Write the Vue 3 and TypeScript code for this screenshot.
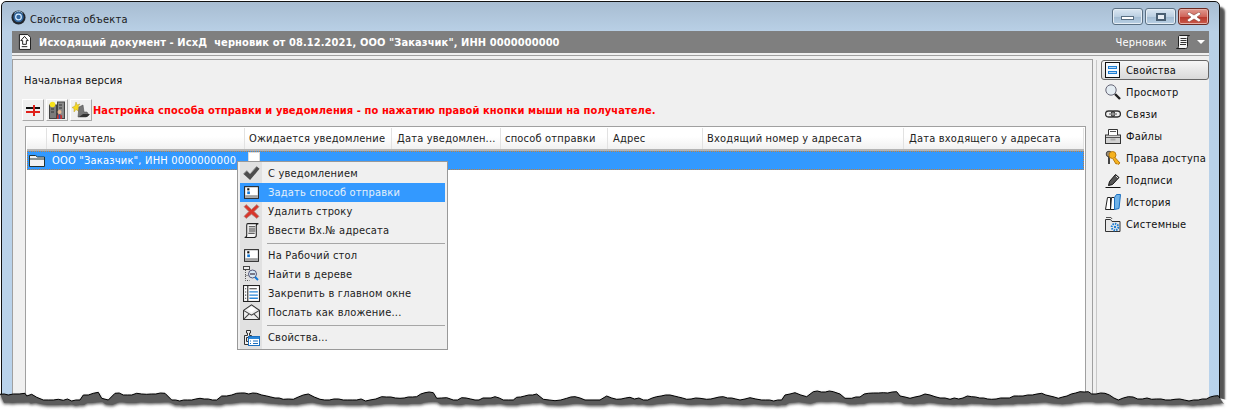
<script setup lang="ts">
const columns = ['', 'Получатель', 'Ожидается уведомление', 'Дата уведомлен...', 'способ отправки', 'Адрес', 'Входящий номер у адресата', 'Дата входящего у адресата']

const tabs = [
  { id: 'form', label: 'Свойства', active: true },
  { id: 'zoom', label: 'Просмотр' },
  { id: 'chain', label: 'Связи' },
  { id: 'box', label: 'Файлы' },
  { id: 'keys', label: 'Права доступа' },
  { id: 'pen', label: 'Подписи' },
  { id: 'books', label: 'История' },
  { id: 'gear', label: 'Системные' },
]

type MenuEntry = { icon?: string; label?: string; hot?: boolean; sep?: boolean }
const menu: MenuEntry[] = [
  { icon: 'check', label: 'С уведомлением' },
  { icon: 'desk', label: 'Задать способ отправки', hot: true },
  { icon: 'cross', label: 'Удалить строку' },
  { icon: 'scroll', label: 'Ввести Вх.№ адресата' },
  { sep: true },
  { icon: 'desk', label: 'На Рабочий стол' },
  { icon: 'tree', label: 'Найти в дереве' },
  { icon: 'pin', label: 'Закрепить в главном окне' },
  { icon: 'mail', label: 'Послать как вложение...' },
  { sep: true },
  { icon: 'props', label: 'Свойства...' },
]

// Torn lower edge of the screenshot, read from the reference (x, y inside a 56px strip, 3x units)
const seg = (dx: number, pts: number[][]) => pts.map(([x, y]) => [dx + x / 3, y / 3])
const anchors = [
  ...seg(0, [[0,103],[25,105],[40,102],[75,100],[80,108],[95,103],[110,112],[130,120],[175,118],[190,121],[240,120],[250,105],[280,100],[295,97],[305,115],[325,120],[345,100],[395,105],[410,100],[440,103],[495,100],[515,120],[575,120],[600,115],[650,120],[665,108],[710,100],[770,100],[800,108],[850,118],[880,118],[925,102],[960,118],[1030,120],[1110,120],[1145,110],[1200,115]]),
  ...seg(400, [[0,115],[50,110],[75,98],[100,98],[110,115],[140,113],[160,120],[185,113],[225,120],[285,110],[310,120],[340,120],[350,112],[410,102],[430,118],[465,122],[500,115],[525,110],[555,120],[600,120],[620,108],[650,118],[690,112],[730,120],[770,110],[810,105],[860,118],[900,115],[920,118],[970,110],[1020,120],[1050,113],[1085,120],[1145,120],[1155,105],[1185,98],[1220,110],[1240,95],[1300,95]]),
  ...seg(835, [[0,97],[30,115],[50,115],[100,100],[145,98],[185,95],[195,108],[225,115],[270,102],[300,110],[345,118],[410,110],[470,118],[550,108],[620,100],[670,115],[735,95],[760,95],[770,102],[810,100],[850,120],[880,110],[950,118],[1020,118],[1090,120],[1150,107],[1155,115]]),
]
// Fine paper roughness between the measured anchors, snapped to whole pixels.
const raw: number[][] = []
anchors.forEach(([x, y], i) => {
  raw.push([x, y])
  const next = anchors[i + 1]
  if (!next) return
  const steps = Math.floor((next[0] - x) / 4)
  for (let s = 1; s < steps; s++) {
    const t = s / steps
    const px = x + (next[0] - x) * t
    const jitter = Math.sin(px * 1.7) * Math.cos(px * 0.61) * 0.9
    raw.push([px, Math.round(y + (next[1] - y) * t + jitter)])
  }
})
const pt = (x: number, y: number) => `${x.toFixed(1)},${y.toFixed(1)}`
const edge = raw.map(([x, y]) => pt(x, y)).join(' ')
const below = `${edge} 1235,42 1235,56 0,56`
// The shadow's lower rim is much flatter than the edge itself.
const shadowPoly = `${edge} ${[...raw].reverse().map(([x, y]) => pt(x + 4, 0.4 * y + 29)).join(' ')}`
</script>

<template>
  <div class="page">
    <svg class="defs" width="0" height="0" aria-hidden="true">
      <defs>
        <symbol id="i-up" viewBox="0 0 14 17">
          <path d="M1.5 .5h9l3 3v13h-12z" fill="#fff" stroke="#111"/>
          <path d="M7 2.500l4 4.500H9v4H5V7H3z" fill="#fff" stroke="#111"/>
          <path d="M4 13.500h6" stroke="#111"/>
        </symbol>
        <symbol id="i-check" viewBox="0 0 18 18">
          <path d="M.5 9.500l3.500-3.500 3.500 3.500 7-8 3 2.500-10 12z" fill="#4c4c4c"/>
          <path d="M.5 9.500l3.500-3.500 3.500 3.500 7-8" fill="none" stroke="#8f8f8f"/>
        </symbol>
        <symbol id="i-desk" viewBox="0 0 16 16">
          <rect x="1.500" y="2.500" width="13" height="11" fill="#fff" stroke="#222"/>
          <rect x="2" y="10.500" width="12" height="2.500" fill="#a0a0a0"/>
          <rect x="4" y="4" width="2" height="2" fill="#111"/>
          <rect x="4" y="7" width="2.500" height="2.500" fill="#1278d8"/>
        </symbol>
        <symbol id="i-cross" viewBox="0 0 16 16">
          <path d="M3 1.500l5 4.500 5-4.500 2 2L10.500 8l4.500 4.500-2 2L8 10.500l-5 4-2-2L5.500 8 1 3.500z" fill="#d8352a" stroke="#a98a85" stroke-width=".7"/>
        </symbol>
        <symbol id="i-scroll" viewBox="0 0 16 16">
          <path d="M4.500 1.500h10c-1.500 0-2 1-2 2v9c0 1-.5 2-2 2h-9c1.500 0 2-1 2-2V3c0-1 .5-1.500 1-1.500z" fill="#f4f4f4" stroke="#222"/>
          <path d="M5.500 4.500h6M5.500 6.500h6M5.500 8.500h6M5 10.500h6" stroke="#333"/>
        </symbol>
        <symbol id="i-tree" viewBox="0 0 17 17">
          <rect x=".5" y=".5" width="6" height="3" fill="#eee" stroke="#444"/>
          <path d="M2.500 4v10.500h4M2.500 9.500h3" stroke="#555" stroke-dasharray="1 1" fill="none"/>
          <circle cx="9.500" cy="8" r="4" fill="#d6e8f5" stroke="#557"/>
          <rect x="7" y="7" width="5" height="2" fill="#778"/>
          <path d="M12 11l3 3" stroke="#1278d8" stroke-width="2"/>
        </symbol>
        <symbol id="i-pin" viewBox="0 0 16 16">
          <rect x=".5" y=".5" width="15" height="15" fill="#fff" stroke="#222"/>
          <path d="M4.500 1v14" stroke="#222"/>
          <path d="M2 3.500h1M2 6.500h1M2 9.500h1M2 12.500h1M6 3.500h7" stroke="#333"/>
          <path d="M6 6.500h8M6 9.500h8M6 12.500h8" stroke="#2a86d8" stroke-width="1.300"/>
        </symbol>
        <symbol id="i-mail" viewBox="0 0 16 16">
          <path d="M.5 6L8 .8 15.500 6v8.500H.5z" fill="#eee" stroke="#333"/>
          <path d="M.5 6L8 10.500 15.500 6M.5 14.500L6 9M15.500 14.500L10 9" fill="none" stroke="#444"/>
          <path d="M4 5l4-2.500L12 5 8 8z" fill="#fff"/>
        </symbol>
        <symbol id="i-props" viewBox="0 0 17 17">
          <path d="M1.500 6.500h3V4h-1V1.500h4V4h-1v2.500h2v2h-5v4h2v3h-4z" fill="#eee" stroke="#333"/>
          <rect x="5.500" y="7.500" width="11" height="9" fill="#fff" stroke="#1a6fc0"/>
          <rect x="6" y="8" width="10" height="2" fill="#2a86d8"/>
          <path d="M7 12h1M10 12h5M7 14.500h1M10 14.500h5" stroke="#1a6fc0"/>
        </symbol>
        <symbol id="i-form" viewBox="0 0 16 16">
          <rect x=".5" y=".5" width="14" height="15" fill="#f4f8fc" stroke="#111"/>
          <rect x="3" y="4" width="9" height="3" fill="#1f7fd4"/>
          <rect x="3" y="9" width="9" height="3" fill="#1f7fd4"/>
          <path d="M4 5.500h7M4 10.500h7" stroke="#fff" stroke-width=".7"/>
        </symbol>
        <symbol id="i-zoom" viewBox="0 0 16 16">
          <circle cx="6" cy="6" r="5.200" fill="#e4ecf2" stroke="#667"/>
          <path d="M10 10l5 5" stroke="#222" stroke-width="2.400"/>
        </symbol>
        <symbol id="i-chain" viewBox="0 0 16 16">
          <rect x=".5" y="5" width="9" height="6" rx="3" fill="none" stroke="#333" stroke-width="1.300"/>
          <rect x="6.500" y="5" width="9" height="6" rx="3" fill="none" stroke="#333" stroke-width="1.300"/>
          <path d="M4 8h8" stroke="#888" stroke-width="1.500"/>
        </symbol>
        <symbol id="i-box" viewBox="0 0 16 16">
          <rect x=".5" y="7" width="15" height="8.500" fill="#d2d2d2" stroke="#333"/>
          <path d="M3.500 7V1.500h9V7" fill="#fff" stroke="#333"/>
          <path d="M5 3.500h6M1 9.500h14" stroke="#555"/>
          <rect x="5.500" y="10.500" width="5" height="2" fill="#aaa"/>
        </symbol>
        <symbol id="i-keys" viewBox="0 0 16 16">
          <circle cx="4" cy="4" r="2.800" fill="#9a8a70" stroke="#444"/>
          <path d="M4 7v7" stroke="#444" stroke-width="2"/>
          <circle cx="7.500" cy="5" r="3.500" fill="#f5b21e" stroke="#b87a10"/>
          <path d="M10 7.500l5 5.500-2 1.500-1-1-1 .5-3-5" fill="#f5b21e" stroke="#b87a10"/>
        </symbol>
        <symbol id="i-pen" viewBox="0 0 16 16">
          <path d="M4.500 9.500l6-7 3.500 3-6.500 7-4 1z" fill="#555" stroke="#111"/>
          <path d="M11 4l2 2" stroke="#ddd"/>
          <path d="M.5 15.500h15" stroke="#111"/>
        </symbol>
        <symbol id="i-books" viewBox="0 0 16 16">
          <path d="M.5 15.500l2-12h3v12zM5.500 15.500l1-12h3v12z" fill="#fff" stroke="#222"/>
          <path d="M9.500 3.500l2-3h4l-1.500 14-4.500 1z" fill="#6fb2e8" stroke="#1a6fc0"/>
        </symbol>
        <symbol id="i-gear" viewBox="0 0 16 16">
          <path d="M.5 3.500h5l1.500 2h8v10H.5z" fill="#e8e8e8" stroke="#333"/>
          <path d="M1 1.500h5l1 1.500" fill="none" stroke="#555"/>
          <circle cx="10" cy="11" r="3.300" fill="none" stroke="#1f7fd4" stroke-width="2" stroke-dasharray="1.500 1"/>
          <circle cx="10" cy="11" r="1.200" fill="#1f7fd4"/>
        </symbol>
        <symbol id="i-tool1" viewBox="0 0 18 18">
          <path d="M2 7h14" stroke="#111" stroke-width="2"/>
          <path d="M2 11h14M10 4v11" stroke="#e0201a" stroke-width="2"/>
        </symbol>
        <symbol id="i-tool2" viewBox="0 0 16 18">
          <rect x=".5" y="4" width="7" height="13.500" fill="#7c7c7c" stroke="#444"/>
          <rect x="8.500" y="1" width="7" height="16.500" fill="#8a8a8a" stroke="#444"/>
          <circle cx="3.500" cy="3.500" r="2.800" fill="#f7e21c"/>
          <path d="M2 8h3M2 11h3M10 4h3M10 7h3" stroke="#333"/>
          <circle cx="10.500" cy="11" r="2" fill="#e8b890"/>
          <path d="M8 18v-3c0-1 1-1.500 2.500-1.500s2.500.5 2.500 1.500v3z" fill="#c8322a"/>
          <path d="M10.500 13.500V18" stroke="#2a5ab0" stroke-width="1.500"/>
        </symbol>
        <symbol id="i-tool3" viewBox="0 0 18 18">
          <path d="M4 1l1 3 3-1-2 2.500 3 1-3 1 1 3-3-2-2 2.500 0-3.500-2-1 3-1.500z" fill="#f7d91c" stroke="#b8a030" stroke-width=".5"/>
          <path d="M7 6l4-2 1 7h3l2 3-3 2H6z" fill="#777" stroke="#444" stroke-width=".5"/>
          <path d="M7 16l4-3h7l-3 3z" fill="#333"/>
        </symbol>
        <symbol id="i-folder" viewBox="0 0 16 13">
          <path d="M.5 3V1.500h6l2 1.500h7v9.500H.5z" fill="#f2f2f2" stroke="#233"/>
          <path d="M.5 5h15" stroke="#233"/>
        </symbol>
        <symbol id="i-logo" viewBox="0 0 16 16">
          <circle cx="8" cy="8" r="7.500" fill="#22272e"/>
          <circle cx="8" cy="7.500" r="5.500" fill="#3268a0"/>
          <circle cx="8" cy="7.500" r="3" fill="none" stroke="#d7ecff" stroke-width="1.300"/>
          <path d="M3.500 3.500a6 6 0 0 1 9 0" fill="none" stroke="#9cc4e4"/>
        </symbol>
      </defs>
    </svg>

    <div class="window">
      <div class="titlebar">
        <svg class="logo"><use href="#i-logo"/></svg>
        <span class="title">Свойства объекта</span>
        <div class="controls">
          <button class="ctl"><span class="min"></span></button>
          <button class="ctl"><span class="max"></span></button>
          <button class="ctl close">
            <svg width="14" height="10" viewBox="0 0 14 10"><path d="M2 0l5 3 5-3 2 2-4 3 4 3-2 2-5-3-5 3-2-2 4-3-4-3z" fill="#fff" stroke="#7a3a30" stroke-width=".5"/></svg>
          </button>
        </div>
      </div>

      <div class="header">
        <svg class="up"><use href="#i-up"/></svg>
        <span class="doc">Исходящий документ - ИсхД&nbsp; черновик от 08.12.2021, ООО "Заказчик", ИНН 0000000000</span>
        <span class="status">Черновик</span>
        <svg class="status-icon"><use href="#i-scroll"/></svg>
        <span class="caret"></span>
      </div>

      <div class="body">
        <div class="main">
          <div class="version">Начальная версия</div>
          <div class="toolbar">
            <button class="tool"><svg class="ti"><use href="#i-tool1"/></svg></button>
            <button class="tool"><svg class="ti"><use href="#i-tool2"/></svg></button>
            <button class="tool"><svg class="ti"><use href="#i-tool3"/></svg></button>
            <span class="hint">Настройка способа отправки и уведомления - по нажатию правой кнопки мыши на получателе.</span>
          </div>
          <div class="grid">
            <div class="grid-head cols">
              <div v-for="(c, i) in columns" :key="i" class="col">{{ c }}</div>
            </div>
            <div class="row cols">
              <svg class="folder"><use href="#i-folder"/></svg>
              <span class="row-text">ООО "Заказчик", ИНН 0000000000</span>
              <span class="box"></span>
            </div>
          </div>
        </div>
        <div class="side">
          <div v-for="t in tabs" :key="t.id" class="tab" :class="{ active: t.active }">
            <svg class="tab-icon"><use :href="'#i-' + t.id"/></svg>
            <span>{{ t.label }}</span>
          </div>
        </div>
      </div>
    </div>

    <div class="menu">
      <template v-for="(m, i) in menu" :key="i">
        <div v-if="m.sep" class="sep"></div>
        <div v-else class="item" :class="{ hot: m.hot }">
          <span class="gutter"><svg class="mi"><use :href="'#i-' + m.icon"/></svg></span>
          <span class="label">{{ m.label }}</span>
        </div>
      </template>
    </div>

    <svg class="torn" width="1235" height="56" viewBox="0 0 1235 56">
      <defs>
        <filter id="soft" x="-5%" y="-50%" width="110%" height="200%"><feGaussianBlur stdDeviation="1.500"/></filter>
      </defs>
      <polygon :points="below" fill="#fff"/>
      <polygon :points="shadowPoly" fill="#5a5a5a" filter="url(#soft)" transform="translate(0 1.500)"/>
      <polygon :points="shadowPoly" fill="#5c5c5c"/>
      <polyline :points="edge" fill="none" stroke="#000" stroke-width="1"/>
    </svg>
  </div>
</template>

<style scoped>
.page {
  position: relative;
  width: 1235px;
  height: 416px;
  overflow: hidden;
  background: #fff;
  font: 11px/13px "DejaVu Sans", sans-serif;
  font-stretch: condensed;
  letter-spacing: .2px;
  color: #111;
}
.defs { position: absolute; }
.window {
  box-sizing: border-box;
  width: 1219px;
  height: 412px;
  margin: 1px 0 0 1px;
  padding: 0 10px 0 10px;
  border: 1px solid #111;
  border-radius: 5px 5px 0 0;
  background: linear-gradient(#a8bdd2 0, #b9d0e6 30px, #b9d3ec 100%);
  box-shadow: 5px 6px 2px #555;
  display: flex;
  flex-direction: column;
}
.titlebar {
  height: 29px;
  display: flex;
  align-items: center;
  flex: none;
}
.logo { width: 15px; height: 15px; margin: 2px 4px 0 -1px; }
.title { margin-top: 5px; color: #1a1a1a; }
.controls { margin-left: auto; display: flex; gap: 2px; }
.ctl {
  box-sizing: border-box;
  width: 31px;
  height: 17px;
  padding: 0;
  border: 1px solid #5a6f82;
  border-radius: 3px;
  background: linear-gradient(#dbe7f2, #bcd0e2 50%, #a2bbd2 51%, #b9d0e4);
  box-shadow: inset 0 0 0 1px #e6eef5;
  display: flex;
  align-items: center;
  justify-content: center;
}
.min { width: 13px; height: 4px; margin-top: 3px; border: 1px solid #5a6f82; background: #fff; box-sizing: border-box; }
.max { width: 10px; height: 8px; border: 2px solid #4a5f72; box-sizing: border-box; background: #e8eef4; }
.close {
  background: linear-gradient(#e09a90, #d0655a 50%, #b8362a 51%, #c95a4c);
  border-color: #6a2a22;
  box-shadow: inset 0 0 0 1px #e8b0a8;
}
.header {
  height: 22px;
  flex: none;
  background: #7f7f7f;
  color: #fff;
  display: flex;
  align-items: center;
  padding: 0 4px 0 6px;
}
.up { width: 13px; height: 16px; margin-right: 8px; }
.doc { font-weight: 700; letter-spacing: .1px; }
.status { margin-left: auto; }
.status-icon { width: 16px; height: 16px; margin: 0 6px 0 8px; }
.caret { width: 0; height: 0; border: 4px solid transparent; border-top: 4px solid #fff; border-bottom: 0; }
.body {
  flex: 1;
  min-height: 0;
  display: flex;
  margin-top: 2px;
  padding-top: 3px;
  border-top: 1px solid #a0a0a0;
  background: #f0f0f0;
  box-shadow: 0 -2px 0 #f0f0f0;
}
.main {
  width: 1081px;
  box-sizing: border-box;
  flex: none;
  border: 1px solid #a0a0a0;
  border-bottom: 0;
  padding: 0 6px 0 12px;
  display: flex;
  flex-direction: column;
}
.version { margin-top: 14px; height: 13px; margin-left: -1px; }
.toolbar { display: flex; margin: 12px 0 0 -3px; gap: 2px; align-items: center; }
.tool {
  box-sizing: border-box;
  width: 22px;
  height: 22px;
  padding: 0;
  background: #f0f0f0;
  border: 1px solid;
  border-color: #fff #a8a8a8 #a8a8a8 #fff;
  display: flex;
  align-items: center;
  justify-content: center;
}
.ti { width: 18px; height: 18px; }
.hint { color: #f00; font-weight: 700; letter-spacing: .09px; margin-left: -1px; }
.grid {
  flex: 1;
  margin-top: 5px;
  border: 1px solid #a0a0a0;
  box-shadow: inset 0 0 0 1px #fff;
  background: #fff;
  padding: 1px;
}
.cols {
  display: grid;
  grid-template-columns: 20px 198px 147px 109px 107px 95px 201px 1fr;
}
.grid-head {
  height: 21px;
  border-bottom: 2px solid #b4b4b4;
  background: linear-gradient(#fff 40%, #f1f1f1);
}
.col {
  box-sizing: border-box;
  padding-left: 4px;
  line-height: 21px;
  white-space: nowrap;
  border-right: 1px solid #e2e2e2;
  color: #222;
}
.col:nth-child(2), .col:nth-child(4), .col:nth-child(6), .col:nth-child(8) { padding-left: 5px; }
.row {
  height: 19px;
  background: #3399ff;
  outline: 1px dotted #c08040;
  outline-offset: -1px;
  align-items: center;
  color: #fff;
}
.folder { width: 16px; height: 13px; margin-left: 2px; }
.row-text { margin-left: 5px; white-space: nowrap; }
.box { width: 12px; height: 12px; background: #fff; margin-left: 3px; margin-top: -6px; border: 1px solid #ddd; box-sizing: border-box; }
.side {
  flex: 1;
  margin: 1px 0 0 3px;
  border-left: 1px solid #c8c8c8;
  padding: 0 0 0 4px;
}
.tab {
  box-sizing: border-box;
  height: 20px;
  margin-bottom: 2px;
  padding-left: 3px;
  display: flex;
  align-items: center;
  gap: 5px;
  border: 1px solid transparent;
}
.tab.active {
  border-color: #666;
  border-radius: 3px;
  background: linear-gradient(#f6f6f6, #d9d9d9);
}
.tab-icon { width: 16px; height: 16px; flex: none; }
.menu {
  position: absolute;
  left: 237px;
  top: 161px;
  width: 211px;
  box-sizing: border-box;
  border: 1px solid #999;
  background: linear-gradient(90deg, #f0f0f0 2px, #e1e1e1 2px, #e1e1e1 24px, #f0f0f0 24px);
  padding: 2px;
}
.item { height: 19px; display: flex; align-items: center; color: #1c1c1c; }
.item.hot { background: #3399ff; color: #e4f0fa; }
.gutter {
  width: 22px;
  height: 19px;
  display: flex;
  align-items: center;
  justify-content: center;
  flex: none;
}
.mi { width: 17px; height: 17px; }
.label { margin-left: 6px; white-space: nowrap; }
.sep {
  height: 6px;
  margin-left: 27px;
  position: relative;
}
.sep::before {
  content: '';
  display: block;
  height: 1px;
  background: #a6a6a6;
  position: relative;
  top: 3px;
}
.torn { position: absolute; left: 0; top: 360px; }
</style>
